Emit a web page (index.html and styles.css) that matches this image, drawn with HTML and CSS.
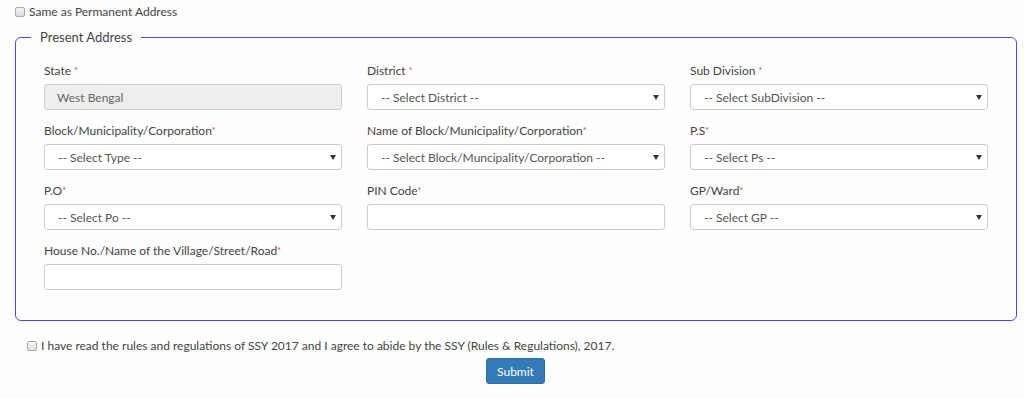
FILE: index.html
```html
<!DOCTYPE html>
<html lang="en">
<head>
<meta charset="UTF-8">
<meta name="viewport" content="width=device-width, initial-scale=1.0">
<title>Present Address</title>
<link rel="stylesheet" href="styles.css">
</head>
<body>

<div class="same-row">
    <label class="check"><input type="checkbox"> Same as Permanent Address</label>
</div>

<fieldset class="address-box">
    <legend>Present Address</legend>
    <div class="grid">
        <div class="field">
            <label>State <span class="req">*</span></label>
            <input type="text" class="form-control" value="West Bengal" disabled>
        </div>
        <div class="field">
            <label>District <span class="req">*</span></label>
            <div class="select-wrap">
                <select class="form-control"><option>-- Select District --</option></select>
            </div>
        </div>
        <div class="field">
            <label>Sub Division <span class="req">*</span></label>
            <div class="select-wrap">
                <select class="form-control"><option>-- Select SubDivision --</option></select>
            </div>
        </div>

        <div class="field">
            <label>Block/Municipality/Corporation<span class="req">*</span></label>
            <div class="select-wrap">
                <select class="form-control"><option>-- Select Type --</option></select>
            </div>
        </div>
        <div class="field">
            <label>Name of Block/Municipality/Corporation<span class="req">*</span></label>
            <div class="select-wrap">
                <select class="form-control"><option>-- Select Block/Muncipality/Corporation --</option></select>
            </div>
        </div>
        <div class="field">
            <label>P.S<span class="req">*</span></label>
            <div class="select-wrap">
                <select class="form-control"><option>-- Select Ps --</option></select>
            </div>
        </div>

        <div class="field">
            <label>P.O<span class="req">*</span></label>
            <div class="select-wrap">
                <select class="form-control"><option>-- Select Po --</option></select>
            </div>
        </div>
        <div class="field">
            <label>PIN Code<span class="req">*</span></label>
            <input type="text" class="form-control">
        </div>
        <div class="field">
            <label>GP/Ward<span class="req">*</span></label>
            <div class="select-wrap">
                <select class="form-control"><option>-- Select GP --</option></select>
            </div>
        </div>

        <div class="field">
            <label>House No./Name of the Village/Street/Road<span class="req">*</span></label>
            <input type="text" class="form-control">
        </div>
    </div>
</fieldset>

<div class="agree-row">
    <label class="check"><input type="checkbox"> I have read the rules and regulations of SSY 2017 and I agree to abide by the SSY (Rules &amp; Regulations), 2017.</label>
</div>

<div class="submit-row">
    <button class="btn-submit">Submit</button>
</div>

</body>
</html>
```

FILE: styles.css
```css
body {
    font-family: Lato, "Open Sans", Arial, sans-serif;
    font-size: 12px;
    color: #444;
    background-color: #fdfefd;
    margin: 0;
    padding: 0;
}
.check {
    display: flex;
    align-items: center;
    line-height: 16px;
}
.check input {
    appearance: none;
    width: 10px;
    height: 10px;
    margin: 0 4px 0 0;
    border: 1px solid #aaa;
    border-radius: 2px;
    background: linear-gradient(#f4f4f4, #dcdcdc);
}
.same-row {
    margin: 4px 0 0 15px;
}
.address-box {
    margin: 9px 0 0 15px;
    width: 1001px;
    box-sizing: border-box;
    border: 1px solid #4848ec;
    border-radius: 6px;
    padding: 18px 28px 30px 28px;
}
.address-box legend {
    font-size: 13px;
    line-height: 16px;
    color: #444;
    padding: 0 9px;
    margin-left: -13px;
}
.grid {
    display: grid;
    grid-template-columns: repeat(3, 298px);
    column-gap: 25px;
    row-gap: 13px;
}
.field label {
    display: block;
    line-height: 16px;
    margin-bottom: 5px;
}
.req {
    color: #e33;
    font-size: 9px;
    vertical-align: top;
}
.form-control {
    display: block;
    width: 100%;
    height: 26px;
    box-sizing: border-box;
    border: 1px solid #ccc;
    border-radius: 3px;
    background-color: #fff;
    font-family: inherit;
    font-size: 12px;
    color: #555;
    padding: 0 12px;
    margin: 0;
}
.form-control:disabled {
    background-color: #eee;
    color: #666;
}
select.form-control {
    appearance: none;
    padding-left: 13px;
}
.select-wrap {
    position: relative;
}
.select-wrap::after {
    content: "";
    position: absolute;
    right: 6px;
    top: 11px;
    border-left: 3px solid transparent;
    border-right: 3px solid transparent;
    border-top: 5px solid #333;
}
.agree-row {
    margin: 17px 0 0 27px;
}
.submit-row {
    text-align: center;
    padding-left: 7px;
    margin-top: 4px;
}
.btn-submit {
    background-color: #337ab7;
    border: 1px solid #2e6da4;
    color: #fff;
    font-family: inherit;
    font-size: 12px;
    height: 26px;
    padding: 0 10px;
    border-radius: 3px;
    cursor: pointer;
}
```
